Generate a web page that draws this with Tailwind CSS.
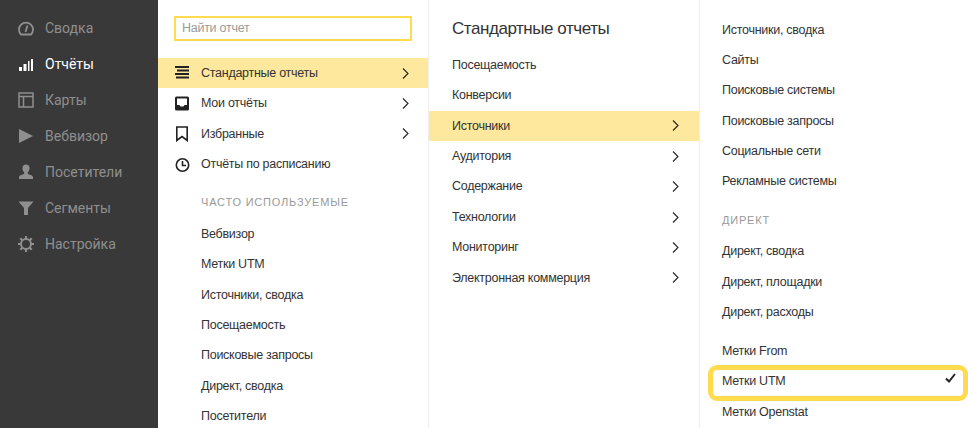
<!DOCTYPE html>
<html lang="ru">
<head>
  <meta charset="UTF-8">
  <title>Отчёты</title>
  <script src="https://cdn.jsdelivr.net/npm/@tailwindcss/browser@4"></script>
</head>
<body class="bg-white">
  <div class="flex w-[968px] h-[428px] overflow-hidden font-['Liberation_Sans','Noto_Sans',sans-serif] text-[12.5px] tracking-[-0.27px] text-[#333]">

    <!-- sidebar -->
    <aside class="w-[158px] shrink-0 bg-[#393939] pt-[10px] font-['Roboto',sans-serif] text-[14px] tracking-normal text-[#8f8f8f]">
      <div class="flex items-center h-[36px]">
        <svg class="ml-[18px] w-[16px] h-[16px]" viewBox="0 0 16 16" fill="none" stroke="#8f8f8f" stroke-width="1.8"><path d="M3 14.5a7 7 0 1 1 10 0z"/><path d="M7.5 12 9.5 5.5"/></svg>
        <span class="ml-[11px]">Сводка</span>
      </div>
      <div class="flex items-center h-[36px] text-white">
        <svg class="ml-[18px] w-[16px] h-[16px]" viewBox="0 0 16 16" fill="#fff"><rect x="1" y="11" width="3" height="4"/><rect x="5.5" y="8" width="3" height="7"/><rect x="10" y="5" width="1.5" height="10"/><rect x="13" y="3" width="2" height="12"/></svg>
        <span class="ml-[11px]">Отчёты</span>
      </div>
      <div class="flex items-center h-[36px]">
        <svg class="ml-[18px] w-[16px] h-[16px]" viewBox="0 0 16 16" fill="none" stroke="#8f8f8f" stroke-width="1.5"><rect x="1" y="1" width="14" height="14"/><path d="M1 4.5H15M5.5 4.5V15" /></svg>
        <span class="ml-[11px]">Карты</span>
      </div>
      <div class="flex items-center h-[36px]">
        <svg class="ml-[18px] w-[16px] h-[16px]" viewBox="0 0 16 16" fill="#8f8f8f"><path d="M1 1 15 8 1 15z"/></svg>
        <span class="ml-[11px]">Вебвизор</span>
      </div>
      <div class="flex items-center h-[36px]">
        <svg class="ml-[18px] w-[16px] h-[16px]" viewBox="0 0 16 16" fill="#8f8f8f"><path d="M8 0.5c2.2 0 3.6 1.6 3.6 3.8 0 1.6-.8 3.2-1.8 4v1.2c0 1 4.7 1.3 5.2 3.4V15H1v-2.100c.5-2.100 5.200-2.400 5.200-3.400V8.300c-1-.8-1.800-2.400-1.800-4C4.400 2.100 5.800.5 8 .5z"/></svg>
        <span class="ml-[11px]">Посетители</span>
      </div>
      <div class="flex items-center h-[36px]">
        <svg class="ml-[18px] w-[16px] h-[16px]" viewBox="0 0 16 16" fill="#8f8f8f"><path d="M0.500 1.500H15.500L10 8V15L6 15V8z"/></svg>
        <span class="ml-[11px]">Сегменты</span>
      </div>
      <div class="flex items-center h-[36px]">
        <svg class="ml-[18px] w-[16px] h-[16px]" viewBox="0 0 16 16" fill="none" stroke="#8f8f8f"><circle cx="8" cy="8" r="5" stroke-width="2"/><path stroke-width="2.200" d="M8 0V3M8 13V16M0 8H3M13 8H16M2.300 2.300 4.500 4.500M11.500 11.500 13.700 13.700M13.700 2.300 11.500 4.500M4.500 11.500 2.300 13.700"/></svg>
        <span class="ml-[11px]">Настройка</span>
      </div>
    </aside>

    <!-- first menu column -->
    <section class="w-[270px] shrink-0 pt-[16px]">
      <div class="mx-[16px] h-[25px] border-2 border-[#ffdb4d] pl-[6px] flex items-center text-[#9a9a9a]">Найти отчет</div>
      <div class="mt-[17px] flex items-center h-[30px] bg-[#fee89d] pl-[16px] pr-[16px]">
        <svg class="w-[16px] h-[14px]" viewBox="0 0 16 14" fill="#222"><rect x="1" y="0" width="14" height="2"/><rect x="3" y="3.500" width="12" height="2"/><rect x="1" y="7" width="14" height="2"/><rect x="2" y="10.500" width="13" height="2"/></svg>
        <span class="ml-[11px] flex-1">Стандартные отчеты</span>
        <svg class="w-[7px] h-[11px] mr-[3px]" viewBox="0 0 7 11" fill="none" stroke="#222" stroke-width="1.100"><path d="M1 .5 6 5.500 1 10.500"/></svg>
      </div>
      <div class="flex items-center h-[30.4px] pl-[16px] pr-[16px]">
        <svg class="w-[16px] h-[15px]" viewBox="0 0 16 15" fill="none"><rect x="1" y="0.500" width="14" height="14" rx="1.500" fill="#222"/><path d="M3 2.500H13V9H10.500L9.500 10.500H6.500L5.500 9H3z" fill="#fff"/></svg>
        <span class="ml-[11px] flex-1">Мои отчёты</span>
        <svg class="w-[7px] h-[11px] mr-[3px]" viewBox="0 0 7 11" fill="none" stroke="#222" stroke-width="1.100"><path d="M1 .5 6 5.500 1 10.500"/></svg>
      </div>
      <div class="flex items-center h-[31px] pl-[16px] pr-[16px]">
        <svg class="w-[16px] h-[16px]" viewBox="0 0 16 16" fill="none" stroke="#222" stroke-width="1.600"><path d="M2.800 1H13.200V14.500L8 10.500 2.800 14.500z"/></svg>
        <span class="ml-[11px] flex-1">Избранные</span>
        <svg class="w-[7px] h-[11px] mr-[3px]" viewBox="0 0 7 11" fill="none" stroke="#222" stroke-width="1.100"><path d="M1 .5 6 5.500 1 10.500"/></svg>
      </div>
      <div class="flex items-center h-[30.4px] pl-[16px] pr-[16px]">
        <svg class="w-[16px] h-[16px]" viewBox="0 0 16 16" fill="none" stroke="#222" stroke-width="1.600"><circle cx="8.500" cy="8" r="6.200"/><path d="M8.500 4V8.500H12"/></svg>
        <span class="ml-[11px] flex-1">Отчёты по расписанию</span>
      </div>
      <div class="mt-[10.500px] h-[24px] pl-[43px] flex items-center text-[11px] tracking-[0.800px] text-[#999]">ЧАСТО ИСПОЛЬЗУЕМЫЕ</div>
      <div class="mt-[4.800px] pl-[43px]">
        <div class="h-[30.4px] flex items-center">Вебвизор</div>
        <div class="h-[30.4px] flex items-center">Метки UTM</div>
        <div class="h-[30.4px] flex items-center">Источники, сводка</div>
        <div class="h-[30.4px] flex items-center">Посещаемость</div>
        <div class="h-[30.4px] flex items-center">Поисковые запросы</div>
        <div class="h-[30.4px] flex items-center">Директ, сводка</div>
        <div class="h-[30.4px] flex items-center">Посетители</div>
      </div>
    </section>

    <!-- second menu column -->
    <section class="w-[271px] shrink-0 border-l border-[#eee] pt-[17px]">
      <div class="pl-[23px] h-[24px] flex items-center text-[17px] tracking-[-0.45px]">Стандартные отчеты</div>
      <div class="mt-[9px]">
        <div class="h-[30.4px] pl-[23px] flex items-center">Посещаемость</div>
        <div class="h-[30.4px] pl-[23px] flex items-center">Конверсии</div>
        <div class="h-[30.4px] pl-[23px] pr-[20px] flex items-center justify-between bg-[#fee89d]">Источники<svg class="w-[7px] h-[11px]" viewBox="0 0 7 11" fill="none" stroke="#222" stroke-width="1.100"><path d="M1 .5 6 5.500 1 10.500"/></svg></div>
        <div class="h-[30.4px] pl-[23px] pr-[20px] flex items-center justify-between">Аудитория<svg class="w-[7px] h-[11px]" viewBox="0 0 7 11" fill="none" stroke="#222" stroke-width="1.100"><path d="M1 .5 6 5.500 1 10.500"/></svg></div>
        <div class="h-[30.4px] pl-[23px] pr-[20px] flex items-center justify-between">Содержание<svg class="w-[7px] h-[11px]" viewBox="0 0 7 11" fill="none" stroke="#222" stroke-width="1.100"><path d="M1 .5 6 5.500 1 10.500"/></svg></div>
        <div class="h-[30.4px] pl-[23px] pr-[20px] flex items-center justify-between">Технологии<svg class="w-[7px] h-[11px]" viewBox="0 0 7 11" fill="none" stroke="#222" stroke-width="1.100"><path d="M1 .5 6 5.500 1 10.500"/></svg></div>
        <div class="h-[30.4px] pl-[23px] pr-[20px] flex items-center justify-between">Мониторинг<svg class="w-[7px] h-[11px]" viewBox="0 0 7 11" fill="none" stroke="#222" stroke-width="1.100"><path d="M1 .5 6 5.500 1 10.500"/></svg></div>
        <div class="h-[30.4px] pl-[23px] pr-[20px] flex items-center justify-between">Электронная коммерция<svg class="w-[7px] h-[11px]" viewBox="0 0 7 11" fill="none" stroke="#222" stroke-width="1.100"><path d="M1 .5 6 5.500 1 10.500"/></svg></div>
      </div>
    </section>

    <!-- third menu column -->
    <section class="flex-1 border-l border-[#eee] pt-[15.400px] pl-[22px]">
      <div class="h-[30.2px] flex items-center">Источники, сводка</div>
      <div class="h-[30.2px] flex items-center">Сайты</div>
      <div class="h-[30.2px] flex items-center">Поисковые системы</div>
      <div class="h-[30.2px] flex items-center">Поисковые запросы</div>
      <div class="h-[30.2px] flex items-center">Социальные сети</div>
      <div class="h-[30.2px] flex items-center">Рекламные системы</div>
      <div class="mt-[11.600px] h-[24px] flex items-center text-[11px] tracking-[0.800px] text-[#999]">ДИРЕКТ</div>
      <div class="mt-[4.400px] h-[30.4px] flex items-center">Директ, сводка</div>
      <div class="h-[30.4px] flex items-center">Директ, площадки</div>
      <div class="h-[30.4px] flex items-center">Директ, расходы</div>
      <div class="mt-[8.600px] h-[30.4px] flex items-center">Метки From</div>
      <div class="relative h-[30.4px] flex items-center">
        Метки UTM
        <div class="absolute left-[-14px] right-0 top-[-2px] h-[36px] border-[5px] border-[#ffdb4d] rounded-[9px]"></div>
        <svg class="absolute right-[12px] top-[6px] w-[11px] h-[10px]" viewBox="0 0 11 10" fill="none" stroke="#222" stroke-width="2"><path d="M1 5.500 4 8.500 10 1"/></svg>
      </div>
      <div class="h-[30.4px] pt-[1px] flex items-center">Метки Openstat</div>
    </section>
  </div>
</body>
</html>
